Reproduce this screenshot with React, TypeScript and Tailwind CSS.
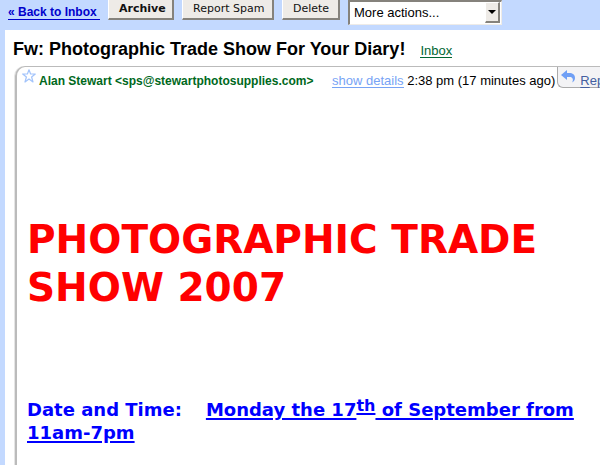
import type { ReactNode } from "react";

function ToolbarButton({ children, className = "" }: { children: ReactNode; className?: string }) {
  return (
    <button
      type="button"
      className={`h-5 whitespace-nowrap border border-t-0 border-b-2 border-r-2 border-white border-b-[#85827c] border-r-[#85827c] bg-[#eeebe7] px-2.5 font-['DejaVu_Sans',sans-serif] text-[11px] leading-4 text-[#111] ${className}`}
    >
      {children}
    </button>
  );
}

function StarIcon() {
  return (
    <svg viewBox="0 0 14 14" className="h-3.5 w-3.5" fill="#fff" stroke="#a3c4fb" strokeWidth="1.2" strokeLinejoin="round" aria-hidden="true">
      <path d="M7 .8 8.6 5h4.7L9.6 8l1.4 5L7 10.1 3 13l1.4-5L.7 5h4.7z" />
    </svg>
  );
}

function ReplyIcon() {
  return (
    <svg viewBox="0 0 14 13" className="h-[13px] w-3.5" fill="#6f9ff5" aria-hidden="true">
      <path d="M0 5 6 0v3h2c3.800 0 6 1.800 6 5 0 2.200-1.200 3.700-3 4.600.7-1.200 1-2.200.8-3.400C11.500 7.500 10.300 7 8.500 7H6v3z" />
    </svg>
  );
}

function Toolbar() {
  return (
    <div className="flex h-[30px] items-start pl-2">
      <a href="#inbox" className="mt-[6px] w-[92px] whitespace-nowrap border-b border-[#0000cc] text-xs leading-[13px] font-bold text-[#0000cc]">
        « Back to Inbox
      </a>
      <div className="ml-2 flex items-start gap-2">
        <ToolbarButton className="w-[66px] font-bold">Archive</ToolbarButton>
        <ToolbarButton className="w-[92px]">Report Spam</ToolbarButton>
        <ToolbarButton className="w-[58px]">Delete</ToolbarButton>
        <div className="relative">
          <select
            aria-label="More actions"
            className="block h-[25px] w-[154px] appearance-none rounded-none border border-t-2 border-l-2 border-[#eeebe7] border-t-[#85827c] border-l-[#85827c] bg-white pl-1 text-[13px] text-black"
          >
            <option>More actions...</option>
          </select>
          <span
            className="pointer-events-none absolute top-0.5 right-0.5 flex h-[21px] w-[15px] items-center justify-center border border-r-2 border-b-2 border-white border-r-[#85827c] border-b-[#85827c] bg-[#eeebe7]"
            aria-hidden="true"
          >
            <svg viewBox="0 0 8 4" className="h-1 w-2">
              <path d="M0 0h8L4 4z" />
            </svg>
          </span>
        </div>
      </div>
    </div>
  );
}

function MessageHeader() {
  return (
    <header className="flex items-start overflow-hidden whitespace-nowrap text-[13px] leading-4">
      <button type="button" aria-label="Star message" className="mt-0.5 ml-[5px] shrink-0">
        <StarIcon />
      </button>
      <p className="mt-1.5 ml-[3px] shrink-0 text-black">
        <b className="inline-block w-[293px] text-xs text-[#00681c]">Alan Stewart &lt;sps@stewartphotosupplies.com&gt;</b>
        <a href="#details" className="inline-block border-b border-[#77a3f5] leading-[13px] text-[#77a3f5]">
          show details
        </a>{" "}
        2:38 pm (17 minutes ago)
      </p>
      <a
        href="#reply"
        className="ml-0.5 flex h-[21px] shrink-0 items-start rounded-bl-md border-b border-l border-[#aaa] bg-[#f3f3f5] pr-4 pl-[3px] text-[#445fa0]"
      >
        <span className="mt-[3px]">
          <ReplyIcon />
        </span>
        <span className="mt-1.5 ml-[5px] leading-4">
          <span className="underline underline-offset-2">R</span>eply
        </span>
      </a>
    </header>
  );
}

export default function App() {
  return (
    <div className="flex h-screen flex-col overflow-hidden bg-[#c3d9ff] font-['Liberation_Sans',Arial,sans-serif]">
      <Toolbar />
      <main className="ml-[5px] flex grow flex-col bg-white">
        <div className="flex items-baseline pt-2 pl-2 leading-[22px]">
          <h1 className="text-lg leading-[22px] font-bold text-black">Fw: Photographic Trade Show For Your Diary!</h1>
          <a href="#label" className="ml-[15px] border-b border-[#006633] text-[13px] leading-[13px] text-[#006633]">
            Inbox
          </a>
        </div>
        <article className="mt-1.5 ml-2.5 grow rounded-tl-[10px] border-t border-l-2 border-t-[#bbb] border-l-[#bbb] shadow-[-1px_0_0_#e5e5e5]">
          <MessageHeader />
          <div className="pr-4 pl-2.5 font-['DejaVu_Sans',sans-serif] font-bold">
            <h2 className="mt-[127px] text-[39px] leading-[48px] text-[#ff0000]">PHOTOGRAPHIC TRADE SHOW 2007</h2>
            <p className="mt-[86px] text-lg leading-[23px] text-[#0000ff]">
              Date and Time:
              <span className="inline-block w-6" />
              <u className="decoration-2 underline-offset-2">Monday the 17</u>
              <sup className="top-[-5px] text-base leading-none underline decoration-2 underline-offset-2">th</sup>
              <u className="decoration-2 underline-offset-2"> of September from 11am-7pm</u>
            </p>
          </div>
        </article>
      </main>
    </div>
  );
}
